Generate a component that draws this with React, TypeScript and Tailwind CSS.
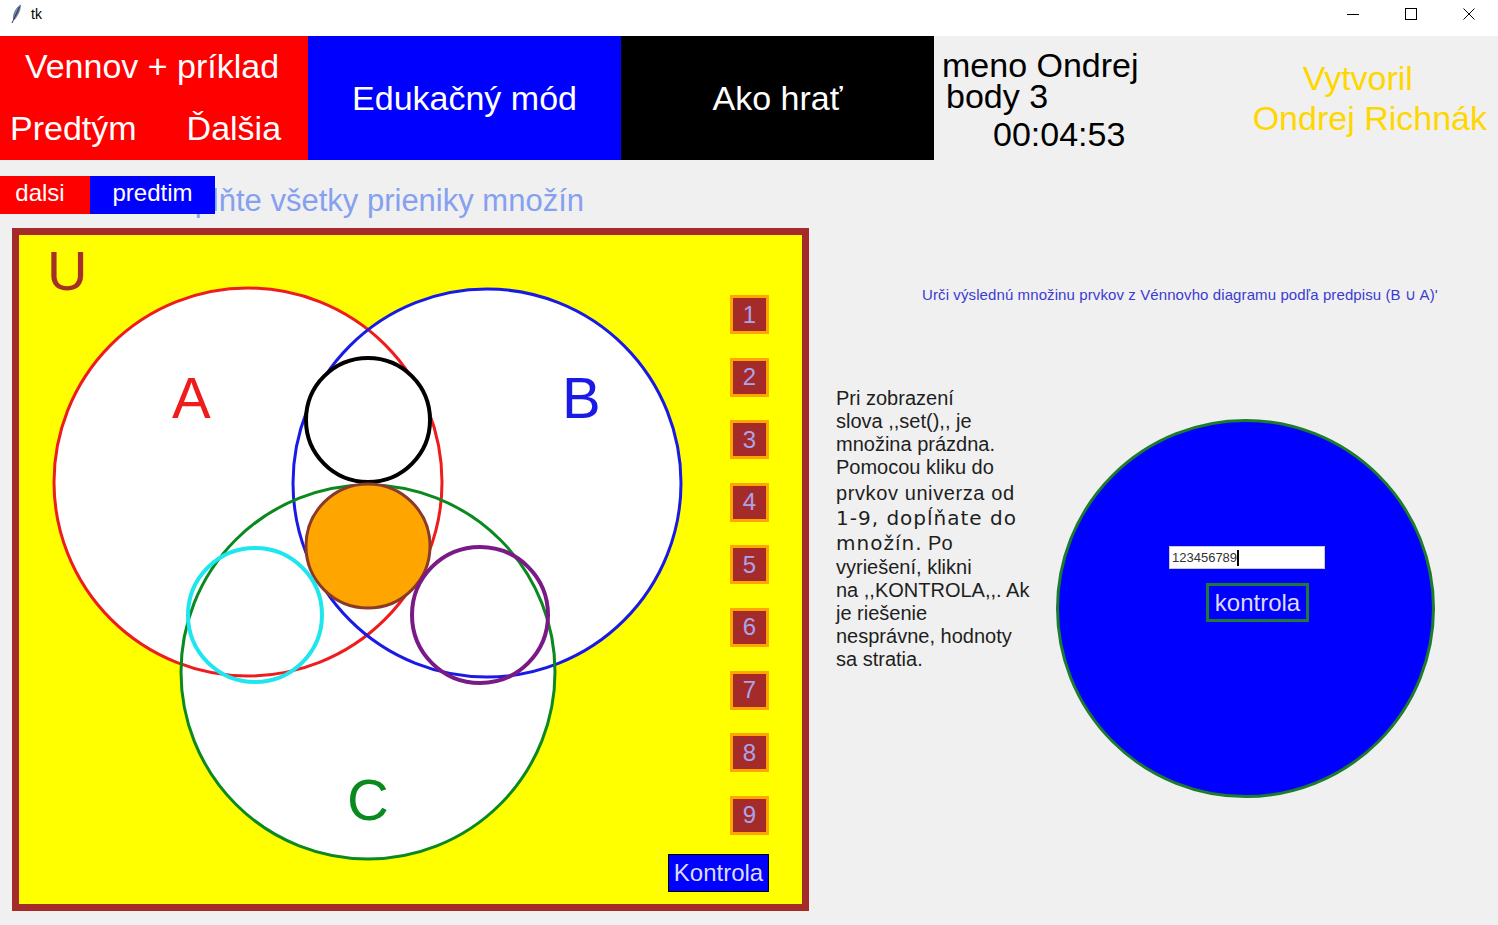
import React from "react";

function Feather() {
  return (
    <svg width="12" height="20" viewBox="0 0 12 20">
      <defs>
        <linearGradient id="fg" x1="0" y1="0" x2="1" y2="1">
          <stop offset="0" stopColor="#9fb3d8" />
          <stop offset="1" stopColor="#3d4f7a" />
        </linearGradient>
      </defs>
      <path d="M10.5 1 C 6 4, 3 9, 3.5 15 L 4.5 15.5 C 8 11, 10.5 6, 10.5 1 Z" fill="url(#fg)" stroke="#4a5a80" strokeWidth="0.6" />
      <path d="M9.5 3 L 2 19" stroke="#2c3550" strokeWidth="1" />
    </svg>
  );
}

function WinControls() {
  return (
    <div className="flex h-full">
      <div className="w-[58px] h-full flex items-center justify-center">
        <svg width="12" height="12" viewBox="0 0 12 12">
          <line x1="0" y1="6.5" x2="12" y2="6.5" stroke="#000" strokeWidth="1" />
        </svg>
      </div>
      <div className="w-[58px] h-full flex items-center justify-center">
        <svg width="12" height="12" viewBox="0 0 12 12">
          <rect x="0.5" y="0.5" width="11" height="11" fill="none" stroke="#000" strokeWidth="1" />
        </svg>
      </div>
      <div className="w-[58px] h-full flex items-center justify-center">
        <svg width="12" height="12" viewBox="0 0 12 12">
          <line x1="0.5" y1="0.5" x2="11.5" y2="11.5" stroke="#000" strokeWidth="1" />
          <line x1="11.5" y1="0.5" x2="0.5" y2="11.5" stroke="#000" strokeWidth="1" />
        </svg>
      </div>
    </div>
  );
}

function Venn() {
  const ff = "Liberation Sans, Arial, sans-serif";
  return (
    <svg className="absolute inset-0" width="783" height="669" viewBox="0 0 783 669">
      <circle cx="229" cy="247" r="194" fill="#ffffff" />
      <circle cx="468" cy="248" r="194" fill="#ffffff" />
      <circle cx="349" cy="437" r="187" fill="#ffffff" />
      <circle cx="229" cy="247" r="194" fill="none" stroke="#ee1c1c" strokeWidth="3" />
      <circle cx="468" cy="248" r="194" fill="none" stroke="#1a1ae6" strokeWidth="3" />
      <circle cx="349" cy="437" r="187" fill="none" stroke="#0a8a1e" strokeWidth="3" />
      <circle cx="349" cy="185" r="62" fill="#ffffff" stroke="#000000" strokeWidth="4" />
      <circle cx="349" cy="311" r="62" fill="#ffa500" stroke="#8b3a2a" strokeWidth="3" />
      <circle cx="236" cy="380" r="67" fill="none" stroke="#1ee6ee" strokeWidth="4" />
      <circle cx="461" cy="380" r="68" fill="none" stroke="#7a1a86" strokeWidth="4" />
      <text x="28" y="55" fontSize="56" fill="#a5302a" fontFamily={ff}>U</text>
      <text x="153" y="183" fontSize="58" fill="#ee1c1c" fontFamily={ff}>A</text>
      <text x="543" y="183" fontSize="58" fill="#1a1ae6" fontFamily={ff}>B</text>
      <text x="328" y="585" fontSize="58" fill="#0a8a1e" fontFamily={ff}>C</text>
    </svg>
  );
}

export default function App() {
  const nums = [1, 2, 3, 4, 5, 6, 7, 8, 9];
  return (
    <div className="w-[1498px] h-[925px] bg-[#f0f0f0] font-['Liberation_Sans',Arial,sans-serif] overflow-hidden flex flex-col">
      {/* title bar */}
      <div className="h-[36px] bg-white flex items-center pb-[8px] shrink-0">
        <div className="ml-[10px] flex items-center"><Feather /></div>
        <span className="ml-[9px] text-[14px] text-black leading-none">tk</span>
        <div className="flex-1" />
        <WinControls />
      </div>

      {/* header */}
      <div className="h-[124px] flex shrink-0 text-[34px]">
        <div className="w-[308px] bg-[#ff0000] text-white leading-[38px] flex flex-col pt-[11px]">
          <div className="text-center pr-[4px]">Vennov + príklad</div>
          <div className="flex mt-[24px]">
            <span className="ml-[10px]">Predtým</span>
            <span className="ml-[50px]">Ďalšia</span>
          </div>
        </div>
        <div className="w-[313px] bg-[#0000ff] text-white flex items-center justify-center">
          Edukačný mód
        </div>
        <div className="w-[313px] bg-black text-white flex items-center justify-center">
          Ako hrať
        </div>
        <div className="flex-1 flex">
          <div className="flex flex-col pl-[8px] pt-[14px] leading-[31px] text-black">
            <div>meno Ondrej</div>
            <div className="ml-[4px]">body 3</div>
            <div className="ml-[51px] mt-[3px] leading-[38px]">00:04:53</div>
          </div>
          <div className="flex-1" />
          <div className="flex flex-col items-center pr-[11px] pt-[22px] leading-[40px] text-[#ffd700]">
            <div className="mr-[24px]">Vytvoril</div>
            <div>Ondrej Richnák</div>
          </div>
        </div>
      </div>

      {/* second row */}
      <div className="h-[68px] relative shrink-0">
        <div className="pl-[155px] pt-[22px] text-[31px] leading-[38px] text-[#86a0f0]">
          Doplňte všetky prieniky množín
        </div>
        <div className="absolute left-0 top-[16px] flex h-[38px] text-[24px] text-white">
          <div className="w-[90px] bg-[#ff0000] flex items-center justify-center pr-[10px] pb-[4px]">dalsi</div>
          <div className="w-[125px] bg-[#0000ff] flex items-center justify-center pb-[4px]">predtim</div>
        </div>
      </div>

      {/* main */}
      <div className="flex flex-1">
        <div className="ml-[12px] w-[797px] h-[683px] border-[7px] border-[#a52a2a] bg-[#ffff00] relative shrink-0">
          <Venn />
          <div className="relative flex flex-col items-end pt-[60px] pr-[33px] gap-[23.6px]">
            {nums.map((n) => (
              <div
                key={n}
                className="w-[39px] h-[39px] bg-[#a52a2a] border-[3px] border-[#ffa500] text-[24px] text-[#aaa4ea] flex items-center justify-center"
              >
                {n}
              </div>
            ))}
            <div className="mt-[-4.6px] w-[101px] h-[38px] bg-[#0000ff] border border-black text-[24px] text-[#dcdcf8] flex items-center justify-center">
              Kontrola
            </div>
          </div>
        </div>

        <div className="flex-1 flex flex-col">
          <div className="mt-[58px] pl-[113px] text-[15px] leading-[18px] tracking-[0.1px] text-[#3b3bd0] whitespace-nowrap">
            Urči výslednú množinu prvkov z Vénnovho diagramu podľa predpisu (B ∪ A)'
          </div>
          <div className="flex items-start pl-[27px]">
            <div className="mt-[83px] w-[200px] text-[20px] leading-[23px] text-[#1e1e1e] whitespace-nowrap">
              <div>Pri zobrazení</div>
              <div>slova ,,set(),, je</div>
              <div>množina prázdna.</div>
              <div>Pomocou kliku do</div>
              <div className="mt-[3px] tracking-[0.6px]">prvkov univerza od</div>
              <div className="font-['DejaVu_Sans',sans-serif] leading-[26px] tracking-[1px]">1-9, dopĺňate do</div>
              <div className="leading-[25px]">
                <span className="font-['DejaVu_Sans',sans-serif] tracking-[1px]">množín.</span> Po
              </div>
              <div>vyriešení, klikni</div>
              <div>na ,,KONTROLA,,. Ak</div>
              <div>je riešenie</div>
              <div>nesprávne, hodnoty</div>
              <div>sa stratia.</div>
            </div>
            <div className="mt-[115px] ml-[20px] w-[379px] h-[379px] rounded-full bg-[#0000ff] border-[3px] border-[#1c7c2c] flex flex-col items-center pt-[124px] shrink-0">
              <div className="ml-[3px] w-[156px] h-[23px] bg-white border border-[#c8c8d8] text-[13px] text-[#333] flex items-center pl-[2px]">
                123456789
                <span className="inline-block w-[2px] h-[16px] bg-black" />
              </div>
              <div className="mt-[14px] ml-[24px] w-[103px] h-[39px] border-[3px] border-[#1f7a3a] text-[24px] text-[#dcdcf8] flex items-center justify-center">
                kontrola
              </div>
            </div>
          </div>
        </div>
      </div>
    </div>
  );
}
